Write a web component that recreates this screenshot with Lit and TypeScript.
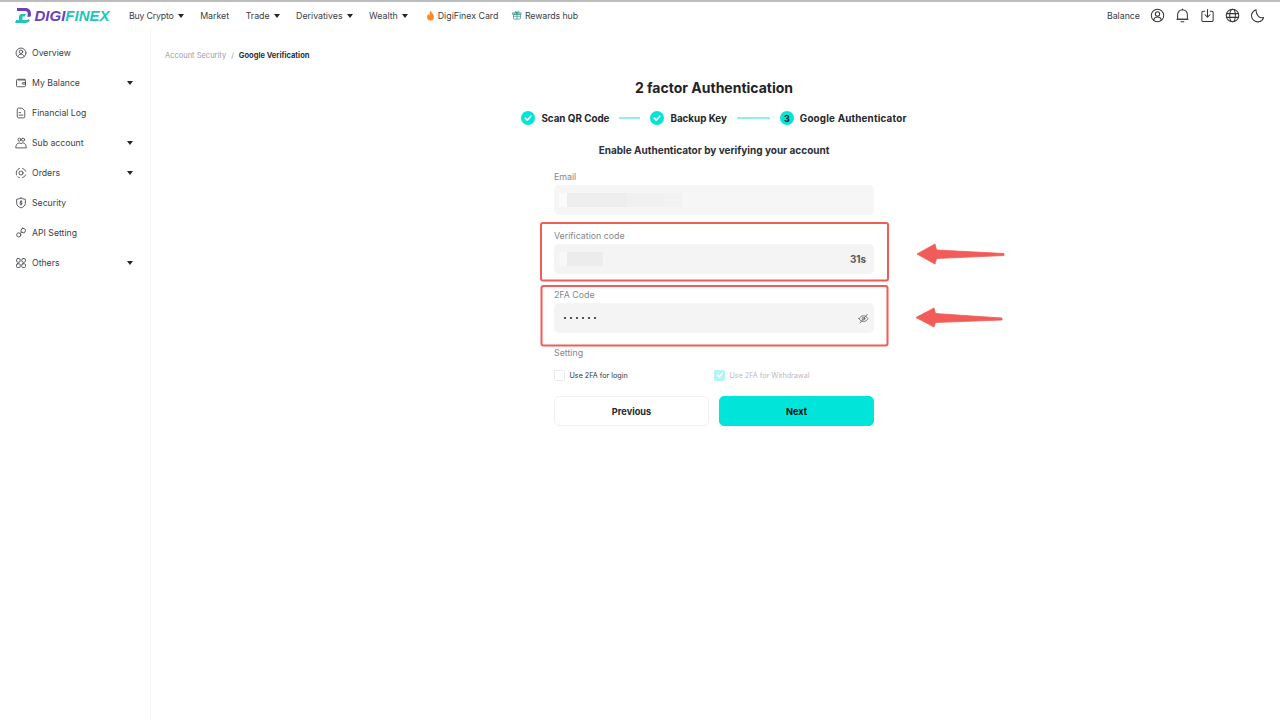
import { LitElement, html, css, svg } from "lit";
import { customElement } from "lit/decorators.js";

const s = (inner: any, size = 14) => html`<svg class="ic" width=${size} height=${size} viewBox="0 0 16 16" fill="none" stroke="currentColor" stroke-width="1.1" stroke-linecap="round" stroke-linejoin="round">${inner}</svg>`;

const icons: Record<string, any> = {
  user: svg`<circle cx="8" cy="8" r="6.6"/><circle cx="8" cy="6.4" r="2.3"/><path d="M3.9 12.6c.6-2 2.2-3 4.1-3s3.5 1 4.1 3"/>`,
  wallet: svg`<path d="M13.5 4V3H3.5A1.5 1.5 0 0 0 2 4.500v7A1.500 1.500 0 0 0 3.500 13h9a1.500 1.500 0 0 0 1.500-1.500V5.500A1.500 1.500 0 0 0 12.500 4H4"/><path d="M14 7.500h-3.500a.9.9 0 0 0 0 2H14"/>`,
  log: svg`<path d="M3 3.200A1.700 1.700 0 0 1 4.700 1.500h4.800L13 5v7.800a1.700 1.700 0 0 1-1.700 1.700H4.700A1.700 1.700 0 0 1 3 12.800z"/><path d="M5.500 7.500h2M5.500 10.800h5"/>`,
  sub: svg`<circle cx="6" cy="3.600" r="2"/><circle cx="10.800" cy="3.600" r="2"/><path d="M1 14c0-3.500 2.100-6 4.500-6 1 0 1.800.3 2.500 1 .7-.7 1.700-1.200 2.700-1.200 2.300 0 4.300 2.600 4.300 6.200z"/>`,
  orders: svg`<path d="M2 10.500A6.500 6.500 0 0 1 6 1.800M10 1.800a6.500 6.500 0 0 1 4.300 4M14.200 10.500a6.500 6.500 0 0 1-4.200 3.800M6 14.300a6.500 6.500 0 0 1-2.200-1.100"/><circle cx="8" cy="8" r="2.700"/>`,
  shield: svg`<path d="M8 1.500c1.900 1 3.700 1.400 5.800 1.500v5c0 3.200-2.400 5.400-5.800 6.500C4.600 13.400 2.200 11.200 2.200 8V3C4.300 2.900 6.100 2.500 8 1.500z"/><path d="M9.500 6.200C9 5.700 7 5.400 6.800 6.600 6.600 8 9.500 7.500 9.300 9c-.2 1.200-2.200 1-2.900.4M8 4.800v6"/>`,
  api: svg`<rect x="8.200" y="2" width="5.500" height="5.500" rx="1.500" transform="rotate(20 11 4.700)"/><circle cx="5" cy="10.500" r="2.800"/><path d="M7 8.500l2-2"/>`,
  others: svg`<rect x="2" y="2" width="5" height="5" rx="2"/><rect x="9" y="2" width="5" height="5" rx="2"/><rect x="2" y="9" width="5" height="5" rx="1.500"/><rect x="9" y="9" width="5" height="5" rx="1.500"/>`,
  bell: svg`<path d="M2.800 12V7a5.200 5.200 0 0 1 10.400 0v5z"/><path d="M2 12h12M6.500 14.700h3M8 1.800V1"/>`,
  download: svg`<path d="M5 3.500H3.500A1.500 1.500 0 0 0 2 5v8a1.500 1.500 0 0 0 1.500 1.500h9A1.500 1.500 0 0 0 14 13V5a1.500 1.500 0 0 0-1.500-1.500H11"/><path d="M8 1.500v8M5.300 7.200L8 9.800l2.700-2.600"/>`,
  globe: svg`<circle cx="8" cy="8" r="6.700"/><ellipse cx="8" cy="8" rx="3" ry="6.700"/><path d="M1.600 6h12.800M1.600 10h12.800"/>`,
  moon: svg`<path d="M6.500 1.800a6.600 6.600 0 1 0 8 8.400c-4 1.300-8.500-2.800-8-8.400z"/>`,
  gift: svg`<rect x="2.500" y="6.500" width="11" height="8" rx="1"/><path d="M1.500 4.500h13v2.500h-13zM8 4.500v10M8 4.500C6 4.500 4.500 3.700 5 2.500S7.500 2.300 8 4.500zM8 4.500c2 0 3.500-.8 3-2S8.500 2.300 8 4.500z"/><path d="M2.500 10h11"/>`,
  eye: svg`<path d="M1.500 8.200C3 5.500 5.300 4 8 4s5 1.500 6.500 4.200C13 11 10.700 12.500 8 12.500s-5-1.500-6.500-4.300z"/><circle cx="8" cy="8.200" r="2"/><path d="M3 14.500L13.500 2"/>`,
};

const Caret = html`<span class="caret"></span>`;

@customElement("app-root")
export class AppRoot extends LitElement {
  static styles = css`
    :host { display: block; width: 1280px; height: 720px; position: relative; overflow: hidden; background: #fff; color: #2b2f36; font-family: Inter, "Noto Sans", sans-serif; }
    .ic { flex: none; display: block; }
    .caret { display: block; width: 0; height: 0; margin-top: 1px; border-left: 3.500px solid transparent; border-right: 3.500px solid transparent; border-top: 4px solid #23262b; flex: none; }

    header { height: 26px; border-top: 2px solid #bdbdbd; display: flex; align-items: center; padding: 0 15px 0 15px; box-sizing: content-box; font-size: 8.800px; color: #3c4046; }
    .logo { display: flex; align-items: center; gap: 2.500px; width: 114px; flex: none; }
    .wordmark { font: italic 700 15px "Liberation Sans", sans-serif; color: #1fc6bb; }
    .wordmark b { color: #6a3fc0; font-weight: 700; }
    nav { display: flex; align-items: center; gap: 16.500px; }
    .nav-item { display: flex; align-items: center; gap: 4px; white-space: nowrap; }
    .tight { letter-spacing: -0.2px; }
    .flame { gap: 2.500px; margin-left: 2px; }
    .reward { gap: 3px; letter-spacing: -0.1px; margin-left: -3px; }
    .reward-ic { color: #2f8f86; display: block; }
    .right { margin-left: auto; display: flex; align-items: center; gap: 10px; }
    .right svg { color: #33373d; }

    .body { display: flex; height: 692px; }
    aside { width: 150px; flex: none; border-right: 1px solid #f6f6f6; padding-top: 10px; box-sizing: content-box; }
    .side { height: 30px; display: flex; align-items: center; padding: 0 17px 0 15px; gap: 5px; font-size: 8.700px; color: #3c4046; }
    .side svg { color: #3c4046; }
    .side .caret { margin-left: auto; margin-top: 0; }

    main { flex: 1; position: relative; display: flex; flex-direction: column; }
    .crumb { margin: 21px 0 0 14px; height: 12px; display: flex; align-items: center; gap: 5px; font-size: 7.500px; color: #9a9da3; }
    .crumb b { color: #2b2f36; font-weight: 700; }
    .center { display: flex; flex-direction: column; align-items: center; padding-right: 3px; }
    h1 { margin: 17px 0 0; font-size: 14px; line-height: 20px; font-weight: 700; color: #1f2226; }
    .steps { display: flex; align-items: center; margin-top: 12px; height: 16px; font-size: 9.800px; font-weight: 700; color: #24272b; }
    .step { display: flex; align-items: center; gap: 6px; white-space: nowrap; }
    .step.last { letter-spacing: 0.2px; }
    .dot { width: 14px; height: 14px; border-radius: 50%; background: #00e4d9; display: flex; align-items: center; justify-content: center; font-size: 9px; font-weight: 700; color: #14181c; flex: none; letter-spacing: 0; }
    .line { height: 1.500px; background: #8ff0ea; margin: 0 10px; }
    h2 { margin: 16px 0 0; font-size: 10px; line-height: 16px; font-weight: 700; color: #2b2f36; }

    form { width: 320px; margin-top: 13px; display: flex; flex-direction: column; }
    label { display: block; font-size: 8.800px; line-height: 12px; color: #85888e; height: 12px; margin-bottom: 2px; }
    .field { margin-bottom: 15px; }
    .input { height: 30px; border-radius: 5px; background: #f4f4f4; display: flex; align-items: center; padding: 0 8px 0 5px; }
    .input.email { background: #f6f6f6; }
    .mask { height: 14px; background: linear-gradient(90deg, #f8f8f8 0 8px, #ececec 8px 100%); }
    .mask.code { width: 44px; }
    .email .mask { width: 123px; background: linear-gradient(90deg, #fbfbfb 0 8px, #eeeeee 8px 55%, #f0f0f0 55% 85%, #f2f2f2 85% 100%); }
    .time { margin-left: auto; font-size: 9.800px; font-weight: 700; color: #55585d; }
    .dots { display: flex; gap: 3.800px; margin-left: 5px; }
    .dots i { width: 2.200px; height: 2.200px; border-radius: 50%; background: #1d2024; display: block; }
    .eye { margin-left: auto; margin-right: -3px; color: #55585d; }
    .setting { height: 12px; margin: -1px 0 10px; }
    .checks { display: flex; height: 12px; font-size: 7.200px; color: #33363b; font-weight: 400; }
    .check { display: flex; align-items: center; gap: 4.500px; width: 165px; }
    .box { width: 9px; height: 9px; border: 1px solid #e9e9e9; border-radius: 1.500px; flex: none; display: flex; align-items: center; justify-content: center; }
    .box.on { background: #b3f6f1; border-color: #b3f6f1; color: #fff; }
    .check.off { color: #b9bbbf; }
    .buttons { display: flex; gap: 10px; margin-top: 15px; }
    button { flex: 1; height: 30px; border-radius: 5px; font: 700 9.200px Inter, sans-serif; border: 1px solid #f0f0f0; background: #fff; color: #24272b; padding: 0; }
    button.primary { background: #00e4d9; border-color: #00e4d9; color: #0c0f12; }

    .overlay { position: absolute; inset: 0; pointer-events: none; }
  `;

  render() {
    const sideItems: [string, string, boolean][] = [
      ["user", "Overview", false], ["wallet", "My Balance", true], ["log", "Financial Log", false],
      ["sub", "Sub account", true], ["orders", "Orders", true], ["shield", "Security", false],
      ["api", "API Setting", false], ["others", "Others", true],
    ];
    const check = html`<svg width="8" height="8" viewBox="0 0 8 8" fill="none" stroke="currentColor" stroke-width="1.400" stroke-linecap="round" stroke-linejoin="round"><path d="M1.500 4.200l1.800 1.800 3.200-3.800"/></svg>`;
    const doneDot = html`<span class="dot"><svg width="10" height="10" viewBox="0 0 10 10" fill="none" stroke="#fff" stroke-width="1.700" stroke-linecap="round" stroke-linejoin="round"><path d="M2.300 5.200l2 2 3.500-4"/></svg></span>`;
    return html`
      <header>
        <div class="logo">
          <svg width="17" height="17" viewBox="0 0 17 17" class="ic">
            <path d="M2 1h8.500C14 1 16 3.500 16 7c0 1-.2 2-.6 2.700h-3.200c.4-.8.600-1.700.600-2.700 0-1.800-1-3-2.800-3H2z" fill="#6a3fc0"/>
            <path d="M0 16l1.200-3H4V9.500c0-1.500 1-2.500 2.500-2.500H11l-1 2.600H7.500V13h3.500c1 0 1.800-.3 2.500-.9L15 13.600C13.800 15.200 12.200 16 10.500 16z" fill="#1fc6bb"/>
          </svg>
          <span class="wordmark"><b>DIGI</b>FINEX</span>
        </div>
        <nav>
          <span class="nav-item"><span class="tight">Buy Crypto</span>${Caret}</span>
          <span class="nav-item">Market</span>
          <span class="nav-item">Trade ${Caret}</span>
          <span class="nav-item">Derivatives ${Caret}</span>
          <span class="nav-item">Wealth ${Caret}</span>
          <span class="nav-item flame"><svg width="9" height="11" viewBox="0 0 10 12"><path d="M5 .5c.5 2 3.800 3.500 3.800 7A3.800 3.800 0 0 1 5 11.500 3.800 3.800 0 0 1 1.200 7.500c0-1.500.8-2.500 1.500-3.200.2 1 .6 1.500 1.100 1.700C4.200 4 4 2 5 .5z" fill="#ff8a1f"/></svg>DigiFinex Card</span>
          <span class="nav-item reward"><span class="reward-ic">${s(icons.gift, 10)}</span>Rewards hub</span>
        </nav>
        <div class="right">
          <span>Balance</span>
          ${s(icons.user, 15)}${s(icons.bell, 15)}${s(icons.download, 15)}${s(icons.globe, 15)}${s(icons.moon, 15)}
        </div>
      </header>
      <div class="body">
        <aside>
          ${sideItems.map(([ic, t, c]) => html`<div class="side">${s(icons[ic], 12)}<span>${t}</span>${c ? Caret : ""}</div>`)}
        </aside>
        <main>
          <div class="crumb"><span>Account Security</span><span>/</span><b>Google Verification</b></div>
          <div class="center">
            <h1>2 factor Authentication</h1>
            <div class="steps">
              <span class="step">${doneDot}Scan QR Code</span>
              <span class="line" style="width:21px"></span>
              <span class="step">${doneDot}Backup Key</span>
              <span class="line" style="width:33px"></span>
              <span class="step last"><span class="dot">3</span>Google Authenticator</span>
            </div>
            <h2>Enable Authenticator by verifying your account</h2>
            <form>
              <div class="field"><label>Email</label><div class="input email"><div class="mask"></div></div></div>
              <div class="field"><label>Verification code</label><div class="input"><div class="mask code"></div><span class="time">31s</span></div></div>
              <div class="field"><label>2FA Code</label><div class="input"><div class="dots">${[1,2,3,4,5,6].map(() => html`<i></i>`)}</div><span class="eye">${s(icons.eye, 11)}</span></div></div>
              <label class="setting">Setting</label>
              <div class="checks">
                <span class="check"><span class="box"></span>Use 2FA for login</span>
                <span class="check off"><span class="box on">${check}</span>Use 2FA for Withdrawal</span>
              </div>
              <div class="buttons"><button type="button">Previous</button><button type="button" class="primary">Next</button></div>
            </form>
          </div>
        </main>
      </div>
      <svg class="overlay" width="1280" height="720" viewBox="0 0 1280 720" fill="none">
        <rect x="541" y="223" width="347" height="57.500" rx="2" stroke="#f25c58" stroke-width="2"/>
        <rect x="541.500" y="286" width="346" height="59.500" rx="2" stroke="#f25c58" stroke-width="2"/>
        <path d="M917 254L935 244L936.500 250L1004 253.500V255.500L936.500 258.500L935 264z" fill="#f25c58" stroke="#f25c58" stroke-width="0.800" stroke-linejoin="round"/>
        <path d="M916 317.500L934 308L935.500 313.500L1002 318V320L935.500 322.500L934 327z" fill="#f25c58" stroke="#f25c58" stroke-width="0.800" stroke-linejoin="round"/>
      </svg>
    `;
  }
}
